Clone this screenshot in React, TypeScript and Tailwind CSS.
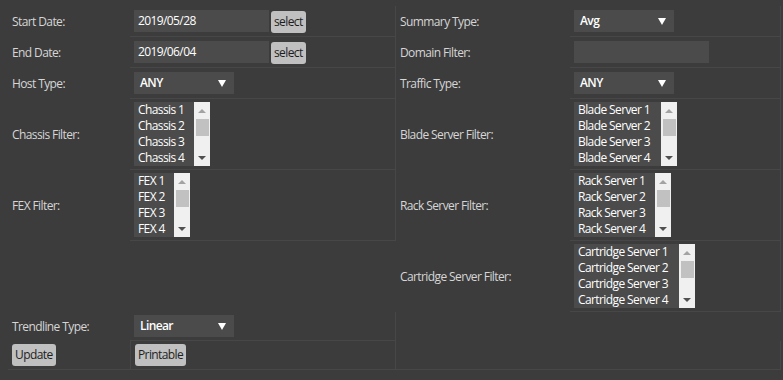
import { ReactNode } from "react";

type ListProps = {
  items: string[];
  width: number;
};

const ListBox = ({ items, width }: ListProps) => {
  return (
    <div className="flex h-[64px]" style={{ width }}>
      <div className="flex-1 bg-[#4b4b4b] pl-[4px] text-white">
        {items.map((item) => (
          <div key={item} className="h-[16px] leading-[16px] whitespace-nowrap">
            {item}
          </div>
        ))}
      </div>
      <div className="w-[16px] bg-[#f0f0f0] flex flex-col items-center">
        <div className="h-[17px] flex items-center justify-center">
          <div className="w-0 h-0 border-l-[4px] border-r-[4px] border-b-[4px] border-l-transparent border-r-transparent border-b-[#a3a3a3]" />
        </div>
        <div className="w-[13px] h-[17px] bg-[#c1c1c1]" />
        <div className="flex-1" />
        <div className="h-[17px] flex items-center justify-center">
          <div className="w-0 h-0 border-l-[4px] border-r-[4px] border-t-[4px] border-l-transparent border-r-transparent border-t-[#505050]" />
        </div>
      </div>
    </div>
  );
};

const Select = ({ value, width = 100 }: { value: string; width?: number }) => (
  <div
    className="h-[22px] bg-[#4b4b4b] flex items-center justify-between pl-[6px] pr-[8px] text-white font-semibold"
    style={{ width }}
  >
    <span>{value}</span>
    <div className="w-0 h-0 border-l-[4px] border-r-[4px] border-t-[7px] border-l-transparent border-r-transparent border-t-white" />
  </div>
);

const TextBox = ({ value, width = 135 }: { value: string; width?: number }) => (
  <div
    className="h-[22px] bg-[#4b4b4b] flex items-center pl-[4px] text-white"
    style={{ width }}
  >
    {value}
  </div>
);

const Button = ({ label }: { label: string }) => (
  <div className="h-[22px] px-[3px] bg-[#c0c0c0] rounded-[3px] flex items-center text-[#1e1e1e]">
    {label}
  </div>
);

const Label = ({ children }: { children?: ReactNode }) => (
  <div className="flex items-center pl-[4px] text-[#d6d6d6]">{children}</div>
);

const Value = ({ children, className = "" }: { children?: ReactNode; className?: string }) => (
  <div className={`flex items-center pl-[4px] border-b border-r border-[#474747] ${className}`}>
    {children}
  </div>
);

export default function App() {
  return (
    <div
      className="w-[783px] h-[380px] bg-[#3c3c3c] pt-[6px] pl-[8px] text-[12px] tracking-[-0.6px]"
      style={{ fontFamily: '"Open Sans", "Noto Sans", sans-serif' }}
    >
      <div className="grid grid-cols-[122px_266px_174px_211px] grid-rows-[31px_31px_31px_71px_71px_71px_29px_29px]">
        <Label>Start Date:</Label>
        <Value className="gap-[2px]">
          <TextBox value="2019/05/28" />
          <div className="mt-[1px]">
            <Button label="select" />
          </div>
        </Value>
        <Label>Summary Type:</Label>
        <Value>
          <Select value="Avg" />
        </Value>

        <Label>End Date:</Label>
        <Value className="gap-[2px]">
          <TextBox value="2019/06/04" />
          <div className="mt-[1px]">
            <Button label="select" />
          </div>
        </Value>
        <Label>Domain Filter:</Label>
        <Value>
          <TextBox value="" />
        </Value>

        <Label>Host Type:</Label>
        <Value>
          <Select value="ANY" />
        </Value>
        <Label>Traffic Type:</Label>
        <Value>
          <Select value="ANY" />
        </Value>

        <Label>Chassis Filter:</Label>
        <Value>
          <ListBox width={76} items={["Chassis 1", "Chassis 2", "Chassis 3", "Chassis 4"]} />
        </Value>
        <Label>Blade Server Filter:</Label>
        <Value>
          <ListBox
            width={103}
            items={["Blade Server 1", "Blade Server 2", "Blade Server 3", "Blade Server 4"]}
          />
        </Value>

        <Label>FEX Filter:</Label>
        <Value>
          <ListBox width={56} items={["FEX 1", "FEX 2", "FEX 3", "FEX 4"]} />
        </Value>
        <Label>Rack Server Filter:</Label>
        <Value>
          <ListBox
            width={97}
            items={["Rack Server 1", "Rack Server 2", "Rack Server 3", "Rack Server 4"]}
          />
        </Value>

        <Label />
        <div />
        <Label>Cartridge Server Filter:</Label>
        <Value>
          <ListBox
            width={121}
            items={[
              "Cartridge Server 1",
              "Cartridge Server 2",
              "Cartridge Server 3",
              "Cartridge Server 4",
            ]}
          />
        </Value>

        <Label>Trendline Type:</Label>
        <Value>
          <Select value="Linear" />
        </Value>
        <div className="col-span-2" />

        <div className="flex items-center pl-[4px] border-b border-[#474747]">
          <Button label="Update" />
        </div>
        <Value className="border-l">
          <Button label="Printable" />
        </Value>
        <div className="col-span-2 border-b border-r border-[#474747]" />
      </div>
    </div>
  );
}
